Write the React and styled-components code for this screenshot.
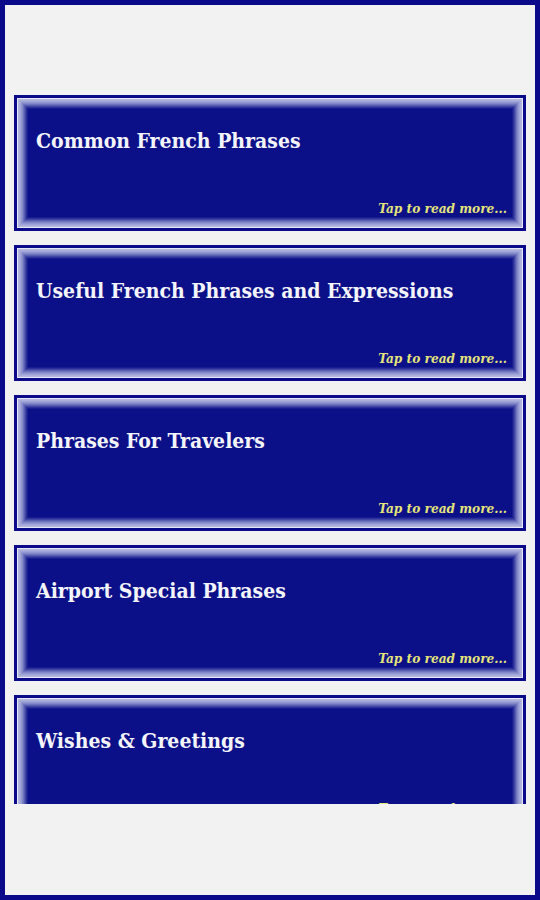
import React from "react";
import styled, { createGlobalStyle } from "styled-components";

const GlobalStyle = createGlobalStyle`
  html, body {
    margin: 0;
    padding: 0;
    background: #0a0a8a;
  }
`;

// Only five topics are visible in the screen, the last one cut by the list edge
const topics = [
  "Common French Phrases",
  "Useful French Phrases and Expressions",
  "Phrases For Travelers",
  "Airport Special Phrases",
  "Wishes & Greetings",
];

const App = () => {
  return (
    <>
      <GlobalStyle />
      <Screen>
        <TopSpace />
        <List>
          {topics.map((title) => (
            <Card key={title}>
              <CardInner>
                <Title>{title}</Title>
                <More>Tap to read more...</More>
              </CardInner>
            </Card>
          ))}
        </List>
        <BottomSpace />
      </Screen>
    </>
  );
};

// Styled components
const Screen = styled.div`
  width: 530px;
  height: 890px;
  border: 5px solid #0a0a8a;
  background: #f2f2f2;
  display: flex;
  flex-direction: column;
  overflow: hidden;
`;

const TopSpace = styled.div`
  height: 90px;
  flex-shrink: 0;
`;

const List = styled.div`
  height: 709px;
  flex-shrink: 0;
  overflow: hidden;
  display: flex;
  flex-direction: column;
  gap: 14px;
  padding: 0 9px;
`;

const BottomSpace = styled.div`
  flex: 1;
  background: #f2f2f2;
`;

const Card = styled.div`
  flex-shrink: 0;
  height: 128px;
  border: 3px solid #0a0a8a;
  background: #e6e6f4;
  padding: 1px;
`;

const CardInner = styled.div`
  height: 100%;
  box-sizing: border-box;
  background: #0b1088;
  position: relative;
  padding: 28px 20px 0 18px;
  box-shadow:
    inset 0 0 0 1px #b4b7e0,
    inset 0 0 0 2px #abafdc,
    inset 0 0 0 3px #a0a4d7,
    inset 0 0 0 4px #9296d0,
    inset 0 0 0 5px #8287c8,
    inset 0 0 0 6px #6e73bd,
    inset 0 0 0 7px #585db2,
    inset 0 0 0 8px #4146a6,
    inset 0 0 0 9px #2a2f9a,
    inset 0 0 0 10px #181d90;
`;

const Title = styled.h2`
  margin: 0;
  font-family: "DejaVu Serif", serif;
  font-stretch: condensed;
  font-weight: bold;
  font-size: 21px;
  line-height: 28px;
  color: #f4f4fb;
`;

const More = styled.div`
  position: absolute;
  right: 15px;
  bottom: 11px;
  font-family: "DejaVu Serif", serif;
  font-stretch: condensed;
  font-style: italic;
  font-weight: bold;
  font-size: 13.5px;
  color: #e4e47a;
`;

export default App;
